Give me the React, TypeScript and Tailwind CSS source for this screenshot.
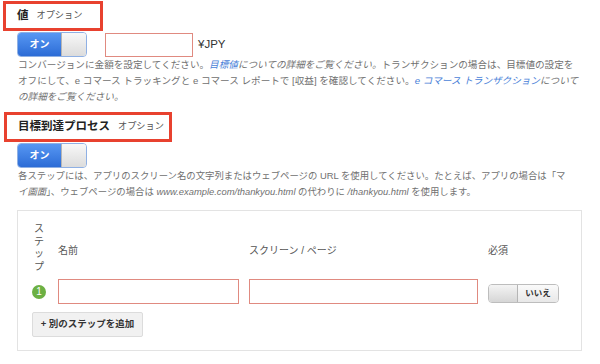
import React from 'react';

// Toggle that shows "オン" on the blue side
function OnToggle() {
  return (
    <div className="flex h-[25px] w-[70px] overflow-hidden rounded-[4px] border border-[#8fb0e4]">
      <div className="flex w-[43px] items-center justify-center bg-linear-to-b from-[#5797f3] to-[#2c6cd6] text-[10px] font-bold text-white">
        オン
      </div>
      <div className="flex-1 border-l border-[#b5b5b5] bg-linear-to-b from-[#f8f8f8] to-[#dcdcdc]" />
    </div>
  );
}

// Small grey "いいえ" toggle used for required column
function NoToggle() {
  return (
    <div className="flex h-[19px] w-[71px] overflow-hidden rounded-[4px] border border-[#bdbdbd]">
      <div className="w-[29px] border-r border-[#b5b5b5] bg-linear-to-b from-[#f4f4f4] to-[#d6d6d6]" />
      <div className="flex flex-1 items-center justify-center bg-linear-to-b from-[#fafafa] to-[#e8e8e8] text-[8.5px] font-bold text-[#333]">
        いいえ
      </div>
    </div>
  );
}

function SectionTitle({ title, width }: { title: string; width: string }) {
  return (
    <div className={`flex h-[30px] items-center gap-[8px] border-[3px] border-[#e8412f] pl-[11px] ${width}`}>
      <span className="text-[11.5px] font-bold text-[#222]">{title}</span>
      <span className="text-[9.2px] text-[#555]">オプション</span>
    </div>
  );
}

export default function App() {
  return (
    <div
      className="h-[364px] w-[600px] overflow-hidden bg-white pl-[3px] pt-[1px]"
      style={{ fontFamily: '"Liberation Sans", "Noto Sans CJK JP", sans-serif' }}
    >
      {/* 値 */}
      <SectionTitle title="値" width="w-[100px]" />
      <div className="ml-[14px] mt-[1px] flex items-center">
        <OnToggle />
        <div className="ml-[18px] h-[24px] w-[88px] border border-[#e08a80] bg-white" />
        <span className="ml-[5px] text-[11.5px] text-[#333]">¥JPY</span>
      </div>
      <p className="ml-[15px] whitespace-nowrap text-[9.6px] leading-[16px] text-[#707070]">
        コンバージョンに金額を設定してください。
        <em>
          <span className="text-[#4a7fd8]">目標値</span>についての詳細をご覧ください。
        </em>
        トランザクションの場合は、目標値の設定を
        <br />
        オフにして、e コマース トラッキングと e コマース レポートで [収益] を確認してください。
        <em>
          <span className="text-[#4a7fd8]">e コマース トランザクション</span>について
          <br />
          の詳細をご覧ください。
        </em>
      </p>

      {/* 目標到達プロセス */}
      <div className="mt-[7px] ml-[1px]">
        <SectionTitle title="目標到達プロセス" width="w-[168px]" />
      </div>
      <div className="ml-[14px] mt-[1px]">
        <OnToggle />
      </div>
      <p className="ml-[15px] whitespace-nowrap text-[9.4px] leading-[16px] text-[#707070]">
        各ステップには、アプリのスクリーン名の文字列またはウェブページの URL を使用してください。たとえば、アプリの場合は「マ
        <br />
        <em>イ画面</em>」、ウェブページの場合は <em>www.example.com/thankyou.html</em> の代わりに{' '}
        <em>/thankyou.html</em> を使用します。
      </p>

      {/* Steps box */}
      <div className="ml-[14px] mt-[10px] h-[141px] w-[565px] border border-[#e3e3e3] pl-[14px] pt-[12px]">
        <div className="flex h-[50px] items-center gap-[12px]">
          <div className="flex w-[14px] flex-col items-center text-[10px] leading-[12.5px] text-[#555]">
            <span>ス</span>
            <span>テ</span>
            <span>ッ</span>
            <span>プ</span>
          </div>
          <div className="flex items-center pt-[4px] text-[10px] text-[#555]">
            <span className="w-[191px]">名前</span>
            <span className="w-[239px]">スクリーン / ページ</span>
            <span>必須</span>
          </div>
        </div>
        <div className="mt-[6px] flex items-center gap-[12px]">
          <div className="flex h-[14px] w-[14px] items-center justify-center rounded-full bg-[#6cb043] text-[10px] text-white">
            1
          </div>
          <div className="flex items-center gap-[10px]">
            <div className="h-[25px] w-[181px] border border-[#e08a80]" />
            <div className="h-[25px] w-[229px] border border-[#e08a80]" />
            <div className="mt-[3px]">
              <NoToggle />
            </div>
          </div>
        </div>
        <button className="mt-[8px] flex h-[25px] w-[111px] items-center justify-center rounded-[2px] border border-[#dcdcdc] bg-[#f1f1f1] text-[9.5px] font-bold text-[#333]">
          + 別のステップを追加
        </button>
      </div>
    </div>
  );
}
